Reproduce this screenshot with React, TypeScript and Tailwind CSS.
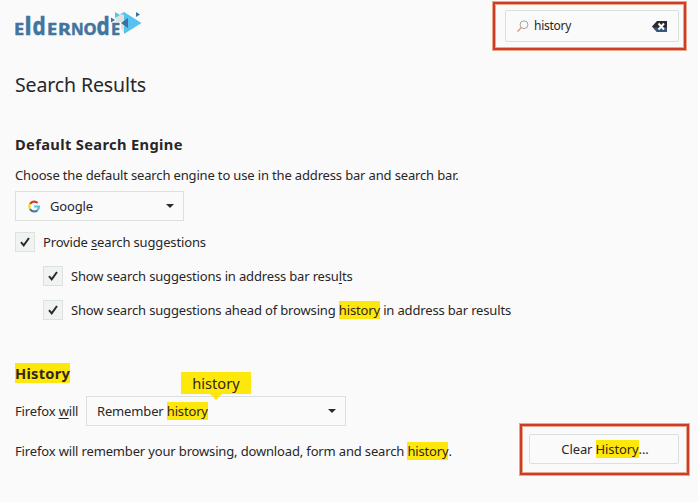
import type { ReactNode } from 'react';

function Mark({ children }: { children: ReactNode }) {
  return <mark className="inline-block bg-[#fee70b] text-[#33241f]">{children}</mark>;
}

function Logo() {
  const letters: { c: string; x: number; w: number; tall?: boolean }[] = [
    { c: 'E', x: -1, w: 10 },
    { c: 'l', x: 9.5, w: 7, tall: true },
    { c: 'd', x: 17.5, w: 13, tall: true },
    { c: 'E', x: 32, w: 10 },
    { c: 'R', x: 43, w: 12.5 },
    { c: 'N', x: 56, w: 12.5 },
    { c: 'O', x: 68.5, w: 13 },
    { c: 'd', x: 81.5, w: 13, tall: true },
    { c: 'E', x: 96, w: 9 },
  ];
  return (
    <svg width="128" height="40" viewBox="0 -4 128 40" role="img" aria-label="eldernode" className="shrink-0 overflow-visible">
      <path d="M101 6 L109 1 L109 22 L106 17 L106 11 L101 11Z" fill="#dce3dc" />
      <path d="M109 1 L126.500 12 L109 23Z" fill="#56c2ee" />
      <path d="M100 1 L105 4 L100 7Z M105 3 L110 1 L110 4Z" fill="#56c2ee" />
      <path d="M96 6.500 L100 9 L96 11.500Z M106 12 L113 7 L113 17Z M121 1 L125 3.500 L121 6Z" fill="#39719f" />
      <g fill="#41749e" stroke="#41749e" strokeWidth="0.500" fontFamily="'Noto Sans', sans-serif" fontWeight="700">
        {letters.map(({ c, x, w, tall }) => (
          <text key={x} x={x} y="23.700" fontSize={tall ? 24.5 : 16.5} textLength={w} lengthAdjust="spacingAndGlyphs">
            {c}
          </text>
        ))}
      </g>
    </svg>
  );
}

function GoogleIcon() {
  return (
    <svg width="12" height="13" viewBox="0 0 12 13" fill="none" strokeWidth="2.200" className="shrink-0">
      <path d="M2 4 A4.900 5 0 0 1 9.600 3" stroke="#cf402b" />
      <path d="M2 9 A5 5 0 0 1 2 4" stroke="#fbdc10" />
      <path d="M2 9 A4.900 5 0 0 0 9.400 10.300" stroke="#4479a0" />
      <path d="M6.200 6.500 H10.900 A5 5 0 0 1 9.400 10.300" stroke="#56bdea" />
    </svg>
  );
}

function Arrow() {
  return (
    <svg width="8" height="4" viewBox="0 0 8 4" className="shrink-0">
      <path d="M0 0 H8 L4 4Z" fill="#272b33" />
    </svg>
  );
}

function CheckRow({ children }: { children: ReactNode }) {
  return (
    <div className="flex h-5 items-center">
      <span className="mr-2 flex size-5 shrink-0 items-center justify-center border border-[#dce3df] bg-[#f1f3f1]">
        <svg width="10" height="10" viewBox="0 0 10 10" fill="none" className="shrink-0">
          <path d="M1 5.200 L3.700 8.300 L9 1" stroke="#272b33" strokeWidth="2" />
        </svg>
      </span>
      <span>{children}</span>
    </div>
  );
}

function RedFrame({ children, className, inset }: { children: ReactNode; className: string; inset: string }) {
  return (
    <div className={`border border-[#eaa58a] ${className}`}>
      <div className="h-full border-2 border-[#cb3d27]">
        <div className={`flex h-full items-start border border-[#eaa58a] ${inset}`}>{children}</div>
      </div>
    </div>
  );
}

export default function App() {
  return (
    <main className="h-[502px] w-[698px] overflow-hidden bg-[#fafafa] pl-[15px] font-['Noto_Sans',sans-serif] text-[13px] leading-[18px] tracking-[-0.155px] whitespace-nowrap text-[#292629]">
      <header className="flex h-[51px] items-start justify-between pr-[11px]">
        <div className="pt-[7px]">
          <Logo />
        </div>
        <RedFrame className="mt-px h-[50px] w-[195px]" inset="pt-[5px] pl-[9px]">
          <div className="flex h-8 w-[174px] shrink-0 items-center rounded-[2px] border border-[#d9e0dd] px-[11px] text-xs tracking-[-0.25px]">
            <svg width="12" height="12" viewBox="0 0 12 12" fill="none" className="mr-[5px] shrink-0">
              <circle cx="7" cy="4.700" r="3.900" stroke="#a4a19c" />
              <path d="M4.200 7.600 L0.500 11.500" stroke="#dc8b70" strokeWidth="1.200" />
            </svg>
            <span className="flex-1">history</span>
            <svg width="15" height="11" viewBox="0 0 15 11" className="shrink-0">
              <path d="M5 0 H15 V11 H5 L0 5.500Z" fill="#292b33" />
              <path d="M5 11 L1 6.500 H15 V11Z" fill="#34597a" />
              <path d="M6.500 2.500 L12 8.500 M12 2.500 L6.500 8.500" stroke="#fafafa" strokeWidth="2" />
            </svg>
          </div>
        </RedFrame>
      </header>

      <h1 className="mt-[20px] h-7 text-[19.5px] leading-7 tracking-[-0.12px]">Search Results</h1>
      <section className="mt-[35px]">
        <h2 className="h-5 text-[14.667px] leading-5 font-bold tracking-[0.35px]">Default Search Engine</h2>
        <p className="mt-[12px]">Choose the default search engine to use in the address bar and search bar.</p>
        <div className="mt-[7px] flex h-[30px] w-[169px] items-center border border-[#d9e0dd] pr-[9px] pl-3">
          <GoogleIcon />
          <span className="ml-[10px] flex-1">Google</span>
          <Arrow />
        </div>
        <div className="mt-[11px] flex flex-col gap-[14px]">
          <CheckRow>Provide <u className="underline underline-offset-2">s</u>earch suggestions</CheckRow>
          <div className="ml-7 flex flex-col gap-[14px]">
            <CheckRow>Show search suggestions in address bar resu<u className="underline underline-offset-2">l</u>ts</CheckRow>
            <CheckRow>Show search suggestions ahead of browsing <Mark>history</Mark> in address bar results</CheckRow>
          </div>
        </div>
      </section>

      <section className="mt-[43px]">
        <h2 className="h-5 text-[14.667px] leading-5 font-bold tracking-[0.25px]"><Mark>History</Mark></h2>
        <div className="mt-[13px] flex h-[30px] items-center">
          <span className="w-[71px]">Firefox <u className="underline underline-offset-2">w</u>ill</span>
          <div className="relative flex h-full w-[260px] items-center border border-[#d9e0dd] pr-[9px] pl-[10px]">
            <span className="flex-1">Remember <Mark>history</Mark></span>
            <Arrow />
            <div className="absolute -top-[25px] left-[94px] flex h-[22px] w-[70px] items-center justify-center bg-[#fee70b] text-[14.667px] tracking-normal text-[#33241f]">
              history
              <svg width="12" height="6" viewBox="0 0 12 6" className="absolute top-[22px] left-[29px]">
                <path d="M0 0 H12 L6 6Z" fill="#fee70b" />
              </svg>
            </div>
          </div>
        </div>
        <div className="-mt-[3px] flex items-start justify-between pr-2">
          <p className="mt-[19px]">Firefox will remember your browsing, download, form and search <Mark>history</Mark>.</p>
          <RedFrame className="h-[53px] w-[171px]" inset="pt-[7px] pl-[6px]">
            <button className="h-[30px] w-[150px] rounded-[2px] border border-[#d9e0dd] pl-[2px] tracking-[-0.12px]">
              Clear <Mark>History</Mark>...
            </button>
          </RedFrame>
        </div>
      </section>
    </main>
  );
}
